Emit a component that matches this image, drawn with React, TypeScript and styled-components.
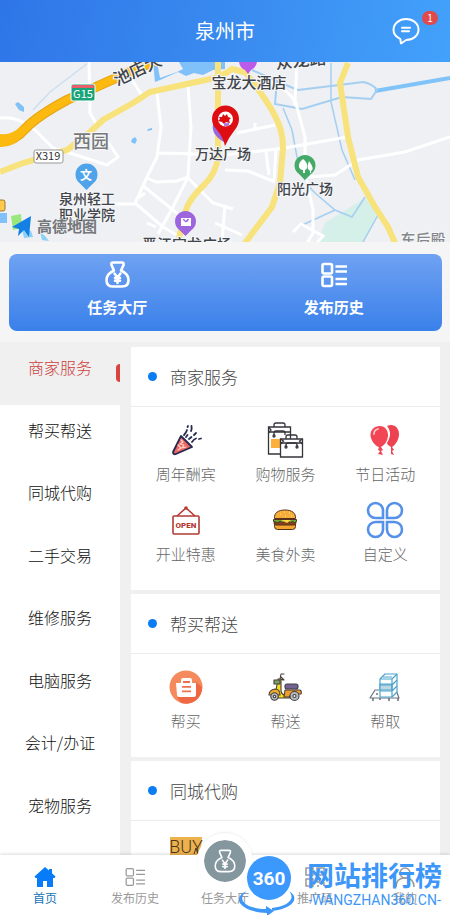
import React, { useState } from "react";
import styled, { createGlobalStyle } from "styled-components";

const GlobalStyle = createGlobalStyle`
  * { box-sizing: border-box; }
  body {
    margin: 0;
    background: #f5f5f5;
    font-family: "Noto Sans CJK SC", "Noto Sans", sans-serif;
    color: #444;
  }
  button {
    border: 0;
    padding: 0;
    background: none;
    font: inherit;
    color: inherit;
    cursor: pointer;
  }
  svg { display: block; }
`;

const Screen = styled.div`
  display: flex;
  flex-direction: column;
  height: 100vh;
  overflow: hidden;
`;

const Header = styled.header`
  display: grid;
  grid-template-columns: 88px 1fr 88px;
  align-items: center;
  flex: none;
  height: 62px;
  background: linear-gradient(100deg, #2e76e8, #3a8cf0 55%, #42a1fb);
  color: #fff;
`;

const Title = styled.h1`
  grid-column: 2;
  margin: 0;
  font-size: 20px;
  line-height: 28px;
  font-weight: 400;
  text-align: center;
`;

const MessageButton = styled.button`
  position: relative;
  width: 28px;
  height: 28px;
  margin-left: 30px;
`;

const Badge = styled.span`
  position: absolute;
  top: -6px;
  left: 30px;
  width: 16px;
  height: 14px;
  border-radius: 8px;
  background: #e04a4c;
  font-size: 10px;
  line-height: 14px;
  text-align: center;
`;

const MapArea = styled.section`
  flex: none;
  height: 180px;
  background: #eef0f4;
  svg { width: 100%; height: 100%; }
  text { font-family: "Noto Sans CJK SC", sans-serif; }
`;

const QuickPanel = styled.section`
  display: grid;
  grid-template-columns: 1fr 1fr;
  flex: none;
  margin: 12px 8px 11px 9px;
  border-radius: 8px;
  background: linear-gradient(#6fa2f2, #3a80ea);
  color: #fff;
`;

const QuickButton = styled.button`
  display: flex;
  flex-direction: column;
  align-items: center;
  gap: 6px;
  padding: 6px 0 12px;
  font-size: 15px;
  line-height: 24px;
  font-weight: 700;
`;

const QuickIcon = styled.span`
  display: grid;
  place-items: center;
  height: 29px;
`;

const Body = styled.div`
  display: flex;
  flex: 1;
  min-height: 0;
  background: #f0f0f0;
`;

const Sidebar = styled.nav`
  flex: none;
  width: 120px;
  background: #fff;
`;

const CategoryList = styled.div`
  display: grid;
  grid-auto-rows: 1fr;
  height: 500px;
`;

const Category = styled.button<{ $active: boolean }>`
  display: grid;
  grid-template-columns: 4px 1fr 4px;
  align-items: center;
  background: ${(p) => (p.$active ? "#f0f0f0" : "#fff")};
  color: ${(p) => (p.$active ? "#cc3f3b" : "#111")};
  font-size: 16px;
  line-height: 24px;
  font-weight: 300;
`;

const CategoryName = styled.span`
  grid-column: 2;
  padding-bottom: 12px;
`;

const Marker = styled.span`
  height: 18px;
  border-radius: 4px 0 0 4px;
  background: #d9443f;
`;

const Main = styled.main`
  display: flex;
  flex: 1;
  flex-direction: column;
  gap: 4px;
  min-width: 0;
  padding: 5px 10px 0 11px;
  overflow-y: auto;
  scrollbar-width: none;
`;

const Card = styled.section`
  flex: none;
  background: #fff;
`;

const CardTitle = styled.h2`
  display: flex;
  align-items: center;
  gap: 13px;
  height: 60px;
  margin: 0;
  padding: 0 0 0 17px;
  border-bottom: 1px solid #ececec;
  font-size: 17px;
  line-height: 26px;
  font-weight: 300;
`;

const Dot = styled.span`
  width: 9px;
  height: 9px;
  border-radius: 50%;
  background: #0b7df2;
`;

const ServiceGrid = styled.div`
  display: grid;
  grid-template-columns: repeat(3, 1fr);
  row-gap: 12px;
  padding: 11px 5px 24px;
`;

const Service = styled.button`
  display: flex;
  flex-direction: column;
  align-items: center;
  color: #666;
  font-size: 15px;
  line-height: 24px;
  font-weight: 300;
`;

const ServiceIcon = styled.span`
  display: grid;
  place-items: center;
  height: 44px;
`;

const Footer = styled.footer`
  position: relative;
  flex: none;
`;

const TabBar = styled.nav`
  display: grid;
  grid-template-columns: repeat(5, 1fr);
  height: 60px;
  background: #fff;
  box-shadow: 0 -1px 3px rgba(0, 0, 0, 0.14);
`;

const Tab = styled.button<{ $active?: boolean }>`
  display: flex;
  flex-direction: column;
  align-items: center;
  justify-content: flex-end;
  height: 60px;
  padding-bottom: 8px;
  color: ${(p) => (p.$active ? "#1674b8" : "#999")};
  font-size: 12px;
  line-height: 18px;
`;

const TabIcon = styled.span`
  display: grid;
  place-items: center;
  height: 24px;
`;

const RaisedIcon = styled.span`
  display: grid;
  place-items: center;
  flex: none;
  width: 56px;
  height: 56px;
  border: 7px solid #fff;
  border-radius: 50%;
  background: #84969e;
  background-clip: padding-box;
  box-shadow: 0 -1px 2px rgba(0, 0, 0, 0.07);
  color: #fff;
`;

const Stamp = styled.aside`
  position: absolute;
  right: 8px;
  bottom: 0;
  display: flex;
  align-items: flex-end;
  gap: 8px;
  color: #3d97f8;
  pointer-events: none;
`;

const StampText = styled.div`
  padding-bottom: 8px;
  text-align: center;
`;

const StampName = styled.div`
  font-size: 27px;
  line-height: 36px;
  font-weight: 700;
`;

const StampSite = styled.div`
  font-family: Roboto, "Liberation Sans", sans-serif;
  font-size: 14px;
  line-height: 14px;
`;

const MoneyBag = ({ size, stroke }: { size: number; stroke: number }) => (
  <svg width={size} height={size} viewBox="0 0 27 27" fill="none" stroke="currentColor" strokeWidth={stroke} strokeLinecap="round" strokeLinejoin="round">
    <path d="M10 9.5 7.6 4.400Q6.600 1.500 9.200 1.500h8.600q2.600 0 1.600 2.900L17 9.500c4.500 2 7.500 5.500 7.500 9.700 0 4.300-2.500 6.300-6.500 6.300H9c-4 0-6.500-2-6.500-6.300 0-4.200 3-7.700 7.500-9.700" />
    <path d="m10.500 12.500 3 4 3-4m-3 4v5.500M11 17h5m-5 2.800h5" />
  </svg>
);

const ListIcon = ({ size, stroke }: { size: number; stroke: number }) => (
  <svg width={size} height={size} viewBox="0 0 26 26" fill="none" stroke="currentColor" strokeWidth={stroke}>
    <rect x="1.5" y="2" width="9.5" height="9.5" rx="1.5" />
    <rect x="1.5" y="14.5" width="9.5" height="9.5" rx="1.5" />
    <path d="M14.5 4.5H26M14.5 9.5H26M14.5 17H26M14.5 22H26" />
  </svg>
);

const Chat = () => (
  <svg width="28" height="28" viewBox="0 0 28 28" fill="none" stroke="#fff" strokeWidth="2" strokeLinecap="round" strokeLinejoin="round">
    <path d="M7 21.2C3.600 19.300 1.500 16.300 1.500 12.700 1.500 6.800 7 2 14 2s12.500 4.600 12.500 10.500S21 23 14.200 23L9 26.500l-.7-4.600" />
    <path d="M10 10.700h8M10 14.300h7" />
  </svg>
);

const CityMap = () => (
  <svg viewBox="0 62 450 180" preserveAspectRatio="xMidYMid slice" role="img" aria-label="泉州市地图">
    <rect y="62" width="450" height="180" fill="#eef0f4" />
    <path d="m325 223 40-25 13 15-14 29h-46Z" fill="#d5efe9" />
    <g fill="#7fc1f8">
      <path d="M153 62h4l3 16 17-6 6-3-4-7h46v7l-12 1-10 5-9-2-8 3-8-4-18 8-5 2Z" />
      <path d="m15 104 3-2 6 5v5l-5-2ZM132 139l3-2 2 3-2 4-4-2ZM148 129l4-1v2l-5 1ZM0 213h7v10H0Z" />
    </g>
    <g fill="none" stroke="#a4cff1" strokeWidth="1.5">
      <path d="M88 63 50 92 33 110" stroke="#cddff0" />
      <path d="m375 91 75-13" stroke="#7fc3f8" strokeWidth="4" />
      <path d="M252 70q45 20 46 20l33-4 32-4q10 2 14 8l-6 9-29-2-40 12-27-5 2-24" strokeWidth="2" />
      <path d="m283 108 9 22 5 27q5 24 18 36l20 17 17 7 13-20M331 63v39l11 48 13 30M335 210l-37 17M378 215l-15 27" />
    </g>
    <g fill="none" stroke="#fff" strokeWidth="3">
      <path d="M89 62l1 51 7 12M0 118q22-2 40 17l13 13 14 4 40 13 11-8-10-15M132 80l11 17" />
      <path d="m157 93 4 34-4 30-10 20-12 26 28 24 14 8M188 87l3 40-3 50-15 30-15 27M158 153l42 1M100 204h35M147 178l9 4 21-1 11-4M142 185l41 33M188 178l25 25 20 6M138 198l7-5" />
      <path d="M297 63l-2 37 10 37v36l8 37v23l-7 12M225 155l60-7 62-11M308 177l27-2 23-15 47-8 45-15M225 170l23 1 27 11M266 152l3 23M276 150l-2 31M237 133l38-8M255 129v-6M225 205l-3 37M215 223l27 12M293 232l8-8 22 12-7 8M147 223l9 4" />
      <path d="M270 82q25 12 25 23" />
    </g>
    <g fill="none" stroke="#f8e27b" strokeWidth="6">
      <path d="m0 172 23-9 44-13 23-18 13-12 30-17 17-11 37-8 33-7 12-8 16 4" />
      <path d="M218 62v95q-2 16-13 27-18 17-20 30l-7 28M246 73q23 30 30 45 7 13 7 30l-3 35-8 24-27 36M348 63l-8 20 8 54 10 40 17 30 13 20 7 16" />
    </g>
    <path d="M0 141q14 1 25-12 12-13 42-29l40-18 50-22" fill="none" stroke="#e6a313" strokeWidth="10" />
    <path d="M0 141q14 1 25-12 12-13 42-29l40-18 50-22" fill="none" stroke="#fcb90f" strokeWidth="8" />
    <path d="M0 134q11 2 21-8l3 8q-10 14-24 13Z" fill="#fcb90f" />
    <g stroke="#fff" strokeWidth="1">
      <rect x="71" y="84" width="24" height="17" rx="2" fill="#19a378" />
      <path d="M72 88v-3h22v3Z" fill="#e6606a" stroke="none" />
      <rect x="34" y="150" width="29" height="13" rx="2" fill="#fff" stroke="#999" />
      <rect x="-5" y="200" width="10" height="11" rx="2" fill="#ffc94b" stroke="#997b36" />
    </g>
    <text x="83" y="98" fontSize="11" fill="#fff" textAnchor="middle">G15</text>
    <text x="48" y="160" fontSize="11" fill="#333" textAnchor="middle">X319</text>
    <path d="m86.500 190-7-7a11 11 0 1 1 14 0Z" fill="#4ea3ea" />
    <text x="86" y="180" fontSize="12" fontWeight="700" fill="#fff" textAnchor="middle">文</text>
    <path d="m185.500 236-6-6a10.500 10.500 0 1 1 12 0Z" fill="#9d66de" />
    <path d="M181 218h10v8h-10Z" fill="#fff" />
    <path d="M183.500 219q2 5 5 0" fill="none" stroke="#9d66de" strokeWidth="1.500" />
    <path d="M239 62h18q-1 6-6 8l-3 4-3-4q-5-2-6-8" fill="#bb5bea" />
    <path d="m305 180-6-6a10.500 10.500 0 1 1 12 0Z" fill="#45aa68" />
    <path d="M303 159q-5 4-4 8 1 3 4 3v3h2v-3q3-1 2-6-1-3-4-5m6 2q-2 5-1 8l2 2v2h1v-2q4-2-2-10" fill="#fff" />
    <path d="M213 124q-2 11 11 18l5-7-9-10Z" fill="#9a66dc" />
    <path d="M225 146q-2-9-8-16-5-5-5-11a13 13 0 0 1 27 0q0 6-5 12-5 6-9 15" fill="#dd0d12" />
    <circle cx="225.500" cy="119" r="7.500" fill="#fff" />
    <path d="m223 114 2 2 2-2 1 3 3 1-2 2 1 3-4-1-2 2-2-2-4-1 2-2-1-2h3Z" fill="#dd0d12" />
    <path d="M224 123h5v3h-5Z" fill="#b77ce4" />
    <g fill="#414449" stroke="#f5f7f9" strokeWidth="2" paintOrder="stroke" fontSize="15" fontWeight="500">
      <text x="117" y="86" fontSize="17" transform="rotate(-25 117 86)">池店大</text>
      <text x="276" y="69" fontSize="17" transform="rotate(-6 276 69)">众龙路</text>
      <text x="249" y="88" textAnchor="middle">宝龙大酒店</text>
      <text x="223" y="159" fontSize="14" textAnchor="middle">万达广场</text>
      <text x="305" y="194" fontSize="14" textAnchor="middle">阳光广场</text>
      <text x="87" y="204" fontSize="14" textAnchor="middle">泉州轻工</text>
      <text x="87" y="220" fontSize="14" textAnchor="middle">职业学院</text>
      <text x="187" y="250" textAnchor="middle">晋江宝龙广场</text>
      <text x="91" y="148" fontSize="18" fill="#77797d" textAnchor="middle">西园</text>
      <text x="423" y="245" fill="#85878b" textAnchor="middle">东后殿</text>
    </g>
    <path d="m11 216 10-2 1 14-9 2Z" fill="#9ae77d" />
    <path d="m22 229 9 2 2 6-9 1ZM40 232l5 4 4 5-7-1Z" fill="#8fd0f6" />
    <path d="m12 227 19-11-2 21-5-7-6 6 1-7Z" fill="#147fe5" />
    <text x="37" y="232" fontSize="15" fontWeight="700" fill="#74777b" stroke="#f2f3f5" strokeWidth="1" paintOrder="stroke">高德地图</text>
  </svg>
);

const Popper = () => (
  <svg width="34" height="34" viewBox="0 0 34 34" fill="none" strokeLinecap="round" strokeLinejoin="round">
    <path d="m12 13 11 11-16 7q-3 1-3-2Z" fill="#ee6560" stroke="#252a51" strokeWidth="1.800" />
    <path d="m12 17 2 2-3 2 4 1-2 3 4-1M9 22l3 3-3 2" stroke="#ffd5cc" strokeWidth="1.200" />
    <path d="M15 12q2-2 3-5m.5-3 .5-1M17 14l1.500-2M22 8q1-2 .5-5M20 16l2.500-2M25 12l2-2M23 19q2-3 4-3.500M30 16l2-.5" stroke="#252a51" strokeWidth="1.800" />
  </svg>
);

const Bags = () => (
  <svg width="38" height="38" viewBox="0 0 38 38" fill="none" stroke="#34343b" strokeWidth="1.300">
    <path d="M2.500 6h22v27h-22ZM2.500 11h22" fill="#fff" />
    <path d="M5 18h10v9H5Z" fill="#fbb03c" stroke="none" />
    <path d="M8 6V4q0-2 2-2h7q2 0 2 2v2M8 14v-2q0-2 2-2h7q2 0 2 2v2" />
    <path d="M14.500 18h22v18h-22ZM14.500 22h22" fill="#fff" />
    <path d="M20 18v-2q0-2 2-2h7q2 0 2 2v2M20 26v-2q0-2 2-2h7q2 0 2 2v2M2.500 6 5 9l-2.500 3M14.500 18l3 2-3 3M36.500 18l-3 2 3 3" />
    <circle cx="8" cy="15" r="1" /><circle cx="20" cy="26" r="1" /><circle cx="31" cy="26" r="1" />
  </svg>
);

const Balloons = () => (
  <svg width="32" height="32" viewBox="0 0 32 32">
    <path d="M18 2c7-3 12 2 12 8 0 7-5 12-7 13l2 3-2 1 2 4-3-1 0-7c-3-2-4-3-4-4 3-5 5-11 0-17" fill="#ed4250" />
    <path d="M11 2C5 2 1.500 6 1.500 11S6 22 10 23l-1 3 2 1-2 3 5 1-2-4 2-1-2-3c4-2 7-7 7-12S16 2 11 2" fill="#f24654" />
    <path d="M5 10q0-4 4-5" fill="none" stroke="#ffc3c7" strokeWidth="1.800" strokeLinecap="round" />
  </svg>
);

const OpenSign = () => (
  <svg width="30" height="32" viewBox="0 0 30 32" fill="none" stroke="#b43a35" strokeWidth="1.600" strokeLinejoin="round">
    <path d="m6 12 9-8 9 8" />
    <circle cx="15" cy="4" r="1" />
    <rect x="2" y="12" width="26" height="18" rx="1" />
    <text x="15" y="24" fontFamily="Roboto, sans-serif" fontSize="8" fontWeight="900" fill="#b43a35" stroke="none" textAnchor="middle">OPEN</text>
  </svg>
);

const Burger = () => (
  <svg width="26" height="26" viewBox="0 0 26 26" stroke="#563019" strokeWidth="1">
    <rect x="2.500" y="15" width="21" height="7.500" rx="3" fill="#f3a52d" />
    <rect x="2" y="14" width="22" height="4" rx="2" fill="#87401d" />
    <path d="M1.500 12.500h23v2q-2 2-4 0-2 2-4 0-2 2-4 0-2 2-4 0-3 2-7 0Z" fill="#6cab35" />
    <path d="m9 13 10 0-4 3Z" fill="#ffd743" stroke="none" />
    <path d="M2.500 11.500C2 6 6 3 13 3s11 3 10.500 8.500Z" fill="#f7ae38" />
    <path d="M8 7h1M12 5h1M17 6h1M13 9h1M19 9h1" stroke="#fff0b0" />
  </svg>
);

const Petals = () => (
  <svg width="38" height="38" viewBox="0 0 38 38" fill="none" stroke="#5590e9" strokeWidth="2.600">
    <path d="M17 17V9.500A7.500 7.500 0 1 0 9.500 17ZM21 17V9.500a7.500 7.500 0 1 1 7.500 7.500ZM17 21v7.500A7.500 7.500 0 1 1 9.500 21ZM21 21v7.500a7.500 7.500 0 1 0 7.500-7.500Z" />
  </svg>
);

const Basket = () => (
  <svg width="34" height="34" viewBox="0 0 34 34">
    <circle cx="17" cy="17" r="16.500" fill="#f58a5c" />
    <path d="m27 12 6 5a16 16 0 0 1-21 16l-4-6Z" fill="#ef6844" />
    <path d="M7 13h5v-3q0-2 2-2h7q2 0 2 2v3h4v12q0 2-2 2H10q-2 0-2-2Z" fill="#fff" />
    <path d="M14 11h7v2h-7ZM13 16h9v1.800h-9ZM13 20.500h9v1.800h-9Z" fill="#ef704d" />
  </svg>
);

const Scooter = () => (
  <svg width="34" height="30" viewBox="0 0 34 30" stroke="#453e40" strokeWidth="1.100" strokeLinejoin="round">
    <path d="M16 2h-3l-1 5 3 1M16 8l-3-3" fill="none" strokeLinecap="round" />
    <path d="M10 7h3v12q1 4 4 4h5v3H10l-2-8Z" fill="#f9dd15" />
    <path d="M6 8h6v4H6Z" fill="#7ca25a" />
    <path d="M17 18h15q2 1 1 4h-9l-3 3h-5Z" fill="#ef9e29" />
    <path d="M1 23q0-5 6-6 5 0 5 6Z" fill="#f3ad27" />
    <rect x="17" y="12" width="13" height="5" rx="2" fill="#716391" />
    <circle cx="6.500" cy="24.500" r="3.700" fill="#b4bbc0" /><circle cx="26.500" cy="24" r="4.500" fill="#b4bbc0" />
    <circle cx="6.500" cy="24.500" r="1.200" fill="#fff" /><circle cx="26.500" cy="24" r="1.500" fill="#fff" />
  </svg>
);

const Parcels = () => (
  <svg width="32" height="32" viewBox="0 0 32 32" fill="none" stroke="#4ba3cb" strokeWidth="1.200" strokeLinejoin="round">
    <path d="M10 19H6l-5 8h29l-3-8" stroke="#6b7580" />
    <path d="m11 8 5-5h12v18l-5 5H11Z" fill="#fff" />
    <path d="M11 13h12v6H11Z" fill="#bfd6e5" />
    <path d="M11 8h12v18M23 8l5-5M11 14h12l5-5M11 20h12l5-5M14 6h9" />
    <path d="M7 23h2M4 27v3M11 27v2M20 27v3M29 27v3" stroke="#6b7580" strokeWidth="1.600" />
  </svg>
);

const Buy = () => (
  <svg width="34" height="34" viewBox="0 0 34 34">
    <path d="M1 0h32l-1 12-4 5v17H1Z" fill="#edb14e" />
    <text x="17" y="16" fontFamily="Roboto, sans-serif" fontSize="18" fill="#4c3620" textAnchor="middle">BUY</text>
    <path d="m25 17 2-6 2 6" fill="none" stroke="#4c3620" />
  </svg>
);

const House = () => (
  <svg width="22" height="22" viewBox="0 0 22 22" fill="#087cf8">
    <path d="m11 1 4 3.500V3h3v4.200l3.500 3.300-1 1.500H19v9h-6v-6H9v6H3v-9H1.500l-1-1.500Z" />
  </svg>
);

const CodeIcon = () => (
  <svg width="22" height="22" viewBox="0 0 22 22" fill="none" stroke="currentColor" strokeWidth="1.500">
    <path d="M2 2h7v7H2ZM13 2h7v7h-7ZM2 13h7v7H2ZM13 13h3v3h-3ZM17 17h3v3M20 12v3M13 20h2" />
  </svg>
);

const Person = () => (
  <svg width="22" height="22" viewBox="0 0 22 22" fill="none" stroke="currentColor" strokeWidth="1.500">
    <circle cx="11" cy="7" r="5" />
    <path d="M2 21q0-9 9-9t9 9" />
  </svg>
);

const StampLogo = () => (
  <svg width="60" height="60" viewBox="0 0 60 60">
    <path d="M8 36C-4 45 8 54 27 54v-3l8 5-7 5v-3C2 57-9 43 8 36M50 36c12 7 3 18-17 20v-3c16-2 24-9 17-17" fill="#3d97f8" />
    <circle cx="30" cy="23" r="22" fill="#3b98fc" />
    <text x="30" y="30" fontFamily="Roboto, sans-serif" fontSize="19" fontWeight="700" fill="#fff" textAnchor="middle">360</text>
  </svg>
);

const categories = ["商家服务", "帮买帮送", "同城代购", "二手交易", "维修服务", "电脑服务", "会计/办证", "宠物服务"];

const sections = [
  {
    title: "商家服务",
    items: [
      { name: "周年酬宾", icon: <Popper /> },
      { name: "购物服务", icon: <Bags /> },
      { name: "节日活动", icon: <Balloons /> },
      { name: "开业特惠", icon: <OpenSign /> },
      { name: "美食外卖", icon: <Burger /> },
      { name: "自定义", icon: <Petals /> },
    ],
  },
  {
    title: "帮买帮送",
    items: [
      { name: "帮买", icon: <Basket /> },
      { name: "帮送", icon: <Scooter /> },
      { name: "帮取", icon: <Parcels /> },
    ],
  },
  { title: "同城代购", items: [{ name: "代购", icon: <Buy /> }] },
];

export default function App() {
  const [active, setActive] = useState(0);
  return (
    <Screen>
      <GlobalStyle />
      <Header>
        <Title>泉州市</Title>
        <MessageButton aria-label="消息">
          <Chat />
          <Badge>1</Badge>
        </MessageButton>
      </Header>
      <MapArea>
        <CityMap />
      </MapArea>
      <QuickPanel>
        <QuickButton>
          <QuickIcon><MoneyBag size={27} stroke={2.6} /></QuickIcon>
          任务大厅
        </QuickButton>
        <QuickButton>
          <QuickIcon><ListIcon size={26} stroke={2.6} /></QuickIcon>
          发布历史
        </QuickButton>
      </QuickPanel>
      <Body>
        <Sidebar aria-label="服务分类">
          <CategoryList>
            {categories.map((name, i) => (
              <Category key={name} $active={i === active} onClick={() => setActive(i)}>
                <CategoryName>{name}</CategoryName>
                {i === active && <Marker />}
              </Category>
            ))}
          </CategoryList>
        </Sidebar>
        <Main>
          {sections.map((section) => (
            <Card key={section.title}>
              <CardTitle><Dot />{section.title}</CardTitle>
              <ServiceGrid>
                {section.items.map((item) => (
                  <Service key={item.name}>
                    <ServiceIcon>{item.icon}</ServiceIcon>
                    {item.name}
                  </Service>
                ))}
              </ServiceGrid>
            </Card>
          ))}
        </Main>
      </Body>
      <Footer>
        <TabBar aria-label="主导航">
          <Tab $active><TabIcon><House /></TabIcon>首页</Tab>
          <Tab><TabIcon><ListIcon size={20} stroke={1.6} /></TabIcon>发布历史</Tab>
          <Tab><RaisedIcon><MoneyBag size={24} stroke={1.8} /></RaisedIcon>任务大厅</Tab>
          <Tab><TabIcon><CodeIcon /></TabIcon>推广码</Tab>
          <Tab><TabIcon><Person /></TabIcon>我的</Tab>
        </TabBar>
        <Stamp>
          <StampLogo />
          <StampText>
            <StampName>网站排行榜</StampName>
            <StampSite>-WANGZHAN360.CN-</StampSite>
          </StampText>
        </Stamp>
      </Footer>
    </Screen>
  );
}
